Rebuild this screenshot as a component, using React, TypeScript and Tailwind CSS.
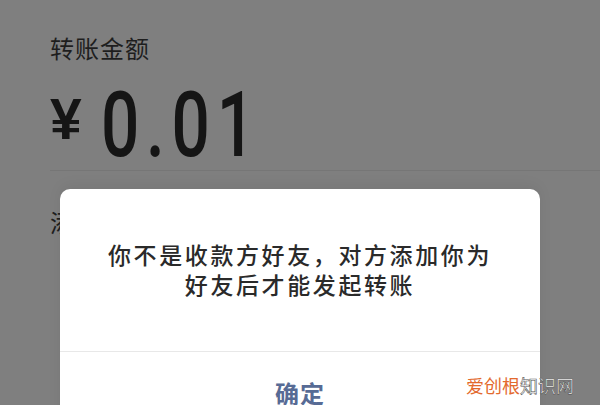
export default function App() {
  return (
    <div className="relative w-[600px] h-[405px] overflow-hidden bg-[#7f7f7f] font-['Noto_Sans_CJK_SC',sans-serif]">
      {/* 页面内容（被遮罩压暗） */}
      <div className="flex flex-col pl-[50px]">
        <div className="mt-[33px] text-[24px] leading-[30px] tracking-[1px] text-[#1e1e1e]">转账金额</div>

        <div className="mt-[18px] flex items-start h-[89px] text-[#151515]">
          <span className="mt-[10px] text-[57px] leading-none font-bold font-['Liberation_Sans',Arial,sans-serif]">¥</span>
          <span className="ml-[19px] inline-block origin-left scale-x-[0.75] text-[90px] leading-none font-medium tracking-[9px] font-['Roboto',sans-serif]">
            0.01
          </span>
        </div>

        <div className="h-px bg-[#767676]" />

        <div className="mt-[36px] text-[24px] leading-[30px] text-[#1e1e1e]">添加转账说明</div>
      </div>

      {/* 弹窗 */}
      <div className="absolute left-[60px] top-[189px] w-[480px] rounded-[10px] bg-white shadow-[0_-4px_14px_rgba(0,0,0,0.06)]">
        <div className="px-[40px] pt-[50px] pb-[52px] text-center text-[23px] leading-[30px] font-medium tracking-[2.6px] text-[#2a2a2a]">
          <p>你不是收款方好友，对方添加你为</p>
          <p>好友后才能发起转账</p>
        </div>
        <div className="h-px bg-[#e8e8e8]" />
        <div className="flex h-[82px] items-center justify-center">
          <span className="text-[24px] font-semibold tracking-[1px] text-[#576b95]">确定</span>
        </div>
      </div>

      {/* 水印 */}
      <div className="absolute left-[466px] top-[373px] flex text-[18px] leading-[24px]">
        <span className="text-[#e3692d]">爱创根</span>
        <span className="text-white [-webkit-text-stroke:0.6px_#555]">知识网</span>
      </div>
    </div>
  );
}
